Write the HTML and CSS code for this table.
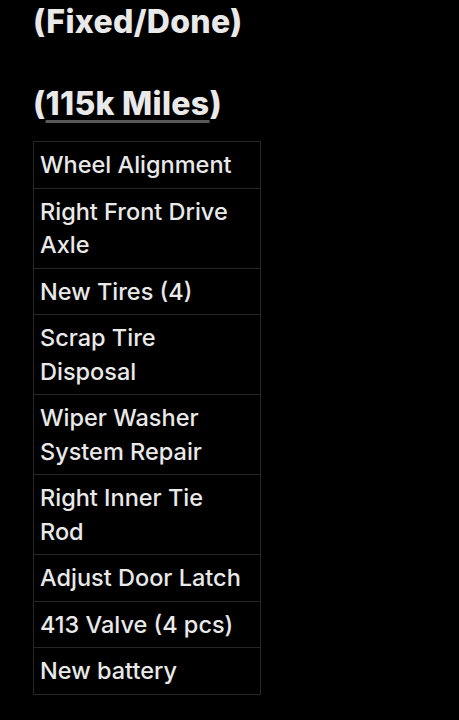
FILE: index.html
```html
<!DOCTYPE html>
<html lang="en">
<head>
    <meta charset="UTF-8">
    <meta name="viewport" content="width=device-width, initial-scale=1.0">
    <title>Repairs</title>
    <link rel="stylesheet" href="styles.css">
</head>
<body>

<div class="note">
    <h2>(Fixed/Done)</h2>
    <h2 class="miles">(<span class="link">115k Miles</span>)</h2>

    <table class="repairs">
        <tr><td>Wheel Alignment</td></tr>
        <tr><td>Right Front Drive Axle</td></tr>
        <tr><td>New Tires (4)</td></tr>
        <tr><td>Scrap Tire Disposal</td></tr>
        <tr><td>Wiper Washer System Repair</td></tr>
        <tr><td>Right Inner Tie Rod</td></tr>
        <tr><td>Adjust Door Latch</td></tr>
        <tr><td>413 Valve (4 pcs)</td></tr>
        <tr><td>New battery</td></tr>
    </table>
</div>

</body>
</html>
```

FILE: styles.css
```css
body {
    margin: 0;
    background-color: #000;
    font-family: Inter, "Noto Sans", sans-serif;
    color: #e9e9e9;
}
.note {
    padding: 0 0 0 33px;
}
.note h2 {
    margin: 0;
    font-size: 32px;
    font-weight: 800;
    line-height: 44px;
    letter-spacing: 0.3px;
}
.note .miles {
    margin-top: 38px;
    margin-bottom: 15px;
}
.link {
    text-decoration: underline;
    text-decoration-color: #5a5a5a;
    text-decoration-thickness: 3px;
    text-underline-offset: 5px;
}
.repairs {
    border-collapse: collapse;
    width: 228px;
}
.repairs td {
    border: 1px solid #262626;
    padding: 6px 12px 6px 6px;
    font-size: 23.5px;
    font-weight: 500;
    line-height: 33.5px;
}
```
